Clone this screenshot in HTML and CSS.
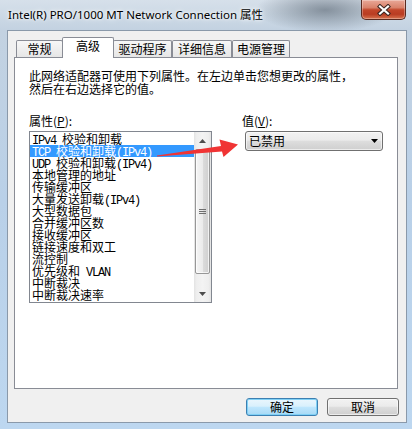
FILE: index.html
```html
<!DOCTYPE html>
<html lang="zh-CN">
<head>
<meta charset="utf-8">
<title>Intel(R) PRO/1000 MT Network Connection 属性</title>
<link rel="stylesheet" href="styles.css">
</head>
<body>
<div class="window">
  <div class="titlebar">
    <span class="title">Intel(R) PRO/1000 MT Network Connection 属性</span>
    <div class="close">
      <svg width="14" height="12" viewBox="0 0 14 12">
        <path d="M3 2.5 L11 9.5 M11 2.5 L3 9.5" stroke="#3b2520" stroke-width="4.2" stroke-linecap="square"/>
        <path d="M3 2.5 L11 9.5 M11 2.5 L3 9.5" stroke="#ffffff" stroke-width="2.2" stroke-linecap="square"/>
      </svg>
    </div>
  </div>
  <div class="client">
    <div class="tabs">
      <div class="tab t1">常规</div>
      <div class="tab t2 active">高级</div>
      <div class="tab t3">驱动程序</div>
      <div class="tab t4">详细信息</div>
      <div class="tab t5">电源管理</div>
    </div>
    <div class="panel">
      <p class="desc">此网络适配器可使用下列属性。在左边单击您想更改的属性，<br>然后在右边选择它的值。</p>
      <div class="props">
        <div class="col-left">
          <div class="label">属性(<u>P</u>):</div>
          <div class="listbox">
            <ul class="items">
              <li><span class="en">IPv4 </span>校验和卸载</li>
              <li class="sel"><span class="en">TCP </span>校验和卸载<span class="en">(IPv4)</span></li>
              <li><span class="en">UDP </span>校验和卸载<span class="en">(IPv4)</span></li>
              <li>本地管理的地址</li>
              <li>传输缓冲区</li>
              <li>大量发送卸载<span class="en">(IPv4)</span></li>
              <li>大型数据包</li>
              <li>合并缓冲区数</li>
              <li>接收缓冲区</li>
              <li>链接速度和双工</li>
              <li>流控制</li>
              <li>优先级和<span class="en"> VLAN</span></li>
              <li>中断裁决</li>
              <li>中断裁决速率</li>
            </ul>
            <div class="sb">
              <div class="sb-btn"><svg width="7" height="4" viewBox="0 0 7 4"><path d="M0 4 L3.5 0 L7 4 Z" fill="#4d4d4d"/></svg></div>
              <div class="thumb">
                <svg width="7" height="6" viewBox="0 0 7 6"><path d="M0 0.5 H7 M0 2.5 H7 M0 4.5 H7" stroke="#6f6f6f" stroke-width="1"/></svg>
              </div>
              <div class="track"></div>
              <div class="sb-btn"><svg width="7" height="4" viewBox="0 0 7 4"><path d="M0 0 L7 0 L3.5 4 Z" fill="#4d4d4d"/></svg></div>
            </div>
          </div>
        </div>
        <div class="col-right">
          <div class="label">值(<u>V</u>):</div>
          <div class="combo">
            <span>已禁用</span>
            <svg width="7" height="4" viewBox="0 0 7 4"><path d="M0 0 L7 0 L3.5 4 Z" fill="#000"/></svg>
          </div>
        </div>
      </div>
    </div>
    <div class="buttons">
      <button class="btn default">确定</button>
      <button class="btn">取消</button>
    </div>
  </div>
  <svg class="annot" width="412" height="429" viewBox="0 0 412 429">
    <polygon points="157,155.5 221,146 219.5,139.5 238,144.5 223.5,157 222,151.5 157,156.5" fill="#f03434"/>
  </svg>
</div>
</body>
</html>
```
FILE: styles.css
```css
body {
  margin: 0;
  width: 412px;
  height: 429px;
  overflow: hidden;
  font-family: "Noto Sans CJK SC", "Noto Sans", sans-serif;
  font-size: 12px;
  color: #000;
}

.window {
  position: relative;
  height: 429px;
  display: flex;
  flex-direction: column;
  background:
    radial-gradient(ellipse 70px 22px at 325px 10px, rgba(70, 82, 95, 0.55), rgba(70, 82, 95, 0)),
    linear-gradient(to bottom, #d6e0ea 0px, #c3d2e1 30px, #b9d0e8 200px, #bdd7f0 429px);
}

.titlebar {
  height: 30px;
  flex-shrink: 0;
  display: flex;
}

.title {
  margin: 8px 0 0 8px;
  line-height: 14px;
  font-family: "Noto Sans", "Noto Sans CJK SC", sans-serif;
  font-size: 11.5px;
  white-space: nowrap;
  text-shadow: 0 0 6px #fff, 0 0 3px #fff;
}

.close {
  margin-left: auto;
  margin-right: 6px;
  width: 45px;
  height: 20px;
  box-sizing: border-box;
  border: 1px solid #5a2a20;
  border-top: none;
  border-radius: 0 0 5px 5px;
  background: linear-gradient(#e9a898, #d9826b 40%, #c2462a 52%, #b93c22 75%, #d8744f);
  box-shadow: inset 0 0 0 1px rgba(255, 255, 255, 0.3);
  display: flex;
  align-items: center;
  justify-content: center;
}

.client {
  flex: 1;
  margin: 0 5px 6px 7px;
  background: #f0f0f0;
  border: 1px solid #8a99aa;
  padding: 6px 8px 0 6px;
  display: flex;
  flex-direction: column;
}

.tabs {
  display: flex;
  height: 20px;
  padding-left: 2px;
  align-items: flex-end;
}

.tab {
  box-sizing: border-box;
  height: 17px;
  border: 1px solid #898c95;
  border-bottom: none;
  border-radius: 2px 2px 0 0;
  background: linear-gradient(#f7f7f7, #e6e6e6);
  text-align: center;
  line-height: 15px;
  font-size: 12px;
}

.t1 { width: 47px; }
.t2 { width: 52px; margin-left: -1px; }
.t3 { width: 59px; margin-left: -1px; }
.t4 { width: 60px; }
.t5 { width: 58px; }

.tab.active {
  align-self: flex-start;
  height: 21px;
  position: relative;
  z-index: 1;
  background: #fff;
  line-height: 15px;
}

.panel {
  height: 332px;
  box-sizing: border-box;
  border: 1px solid #898c95;
  background: #fff;
  padding: 11px 14px 0 14px;
}

.desc {
  margin: 0;
  line-height: 13px;
  white-space: nowrap;
}

.props {
  display: flex;
  margin-top: 19px;
}

.label {
  height: 13px;
  line-height: 13px;
}

.col-left {
  width: 186px;
}

.listbox {
  margin-top: 4px;
  height: 172px;
  box-sizing: border-box;
  border: 1px solid #828790;
  background: #fff;
  display: flex;
}

.items {
  list-style: none;
  margin: 0;
  padding: 1px 0 0 0;
  flex: 1;
  min-width: 0;
  font-family: "Noto Sans CJK SC", sans-serif;
  font-size: 12px;
}

.items li {
  height: 12px;
  line-height: 12px;
  padding-left: 2px;
  white-space: nowrap;
}

.items .en {
  font-family: "Liberation Mono", monospace;
  letter-spacing: -1.2px;
  white-space: pre;
}

.items li.sel {
  background: #3399ff;
  color: #fff;
}

.sb {
  width: 17px;
  display: flex;
  flex-direction: column;
  background: linear-gradient(to right, #e3e3e3, #eeeeee 15%, #f3f3f3 50%, #eeeeee 85%, #e3e3e3);
}

.sb-btn {
  height: 17px;
  display: flex;
  align-items: center;
  justify-content: center;
}

.thumb {
  height: 125px;
  margin: 0 1px;
  box-sizing: border-box;
  border: 1px solid #979797;
  border-radius: 2px;
  background: linear-gradient(to right, #f5f5f5, #ebebeb 50%, #dcdcdc 52%, #cfcfcf);
  box-shadow: inset 0 0 0 1px rgba(255, 255, 255, 0.7);
  display: flex;
  align-items: center;
  justify-content: center;
}

.track {
  flex: 1;
}

.col-right {
  margin-left: 30px;
}

.combo {
  margin: 4px 0 0 3px;
  width: 138px;
  height: 20px;
  box-sizing: border-box;
  border: 1px solid #707070;
  border-radius: 3px;
  background: linear-gradient(#f2f2f2, #ebebeb 45%, #dddddd 52%, #cfcfcf);
  box-shadow: inset 0 0 0 1px rgba(255, 255, 255, 0.6);
  display: flex;
  align-items: center;
  justify-content: space-between;
  padding: 0 4px 0 3px;
  line-height: 16px;
}

.buttons {
  display: flex;
  justify-content: flex-end;
  gap: 9px;
  margin: 9px -1px 0 0;
}

.btn {
  width: 72px;
  height: 18px;
  box-sizing: border-box;
  padding: 0;
  border: 1px solid #707070;
  border-radius: 3px;
  background: linear-gradient(#f2f2f2, #ebebeb 45%, #dddddd 52%, #cfcfcf);
  box-shadow: inset 0 0 0 1px rgba(255, 255, 255, 0.6);
  font-family: "Noto Sans CJK SC", sans-serif;
  font-size: 12px;
  line-height: 16px;
  color: #000;
}

.btn.default {
  border-color: #3c7fb1;
  background: linear-gradient(#eaf6fd, #d9f0fc 45%, #bee6fd 52%, #a7d9f5);
  box-shadow: inset 0 0 0 1px #7fd0f5;
}

.annot {
  position: absolute;
  left: 0;
  top: 0;
  pointer-events: none;
}
```
